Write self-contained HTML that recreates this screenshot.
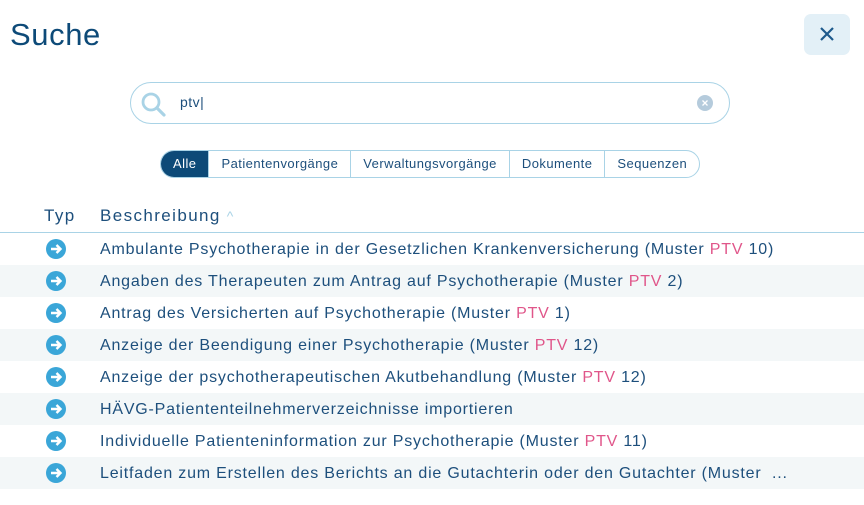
<!DOCTYPE html>
<html><head><meta charset="utf-8"><style>
*{margin:0;padding:0;box-sizing:border-box}
body{width:864px;height:505px;background:#fff;font-family:"Liberation Sans",sans-serif;color:#1d4f7c;position:relative;overflow:hidden}
.title{position:absolute;left:10px;top:17px;font-size:31px;color:#0d4a78;letter-spacing:0.6px}
.close{position:absolute;left:804px;top:14px;width:46px;height:41px;background:#e3f0f7;border-radius:7px}
.search{position:absolute;left:130px;top:82px;width:600px;height:42px;border:1.5px solid #a9d3e6;border-radius:21px}
.search .q{position:absolute;left:49px;top:11px;font-size:14px;color:#1d4f7c;letter-spacing:0.5px}
.clr{position:absolute;left:566px;top:12px;width:16px;height:16px;border-radius:50%;background:#b5cbdc}
.tabs{position:absolute;left:160px;top:150px;height:28px;border:1px solid #a9d3e6;border-radius:14px;display:flex;overflow:hidden;font-size:13px;letter-spacing:0.45px}
.tabs div{padding:0 12px;line-height:26px;border-left:1px solid #a9d3e6;color:#1d4f7c}
.tabs div.a{background:#0d4a78;color:#fff;border-left:none;padding:0 12px}
.hdr{position:absolute;top:206px;font-size:17px;color:#1d4f7c;letter-spacing:1.4px}
.line{position:absolute;left:0;top:232px;width:864px;height:1px;background:#a9d3e6}
.row{position:absolute;left:0;width:864px;height:32px}
.row.alt{background:#f3f7f8}
.row svg{position:absolute;left:46px;top:6px}
.row span{position:absolute;left:100px;top:8px;font-size:16px;white-space:nowrap;letter-spacing:0.8px}
.p{color:#e0568a}
</style></head><body>
<div class="title">Suche</div>
<div class="close"><svg width="46" height="41"><path d="M17 14 L29 26 M29 14 L17 26" stroke="#1d5a8c" stroke-width="2.2"/></svg></div>
<div class="search">
<svg style="position:absolute;left:8px;top:7px" width="28" height="28"><circle cx="12" cy="12" r="8" fill="none" stroke="#a9d3e6" stroke-width="2.8"/><path d="M18 18 L25 25" stroke="#a9d3e6" stroke-width="3.2" stroke-linecap="round"/></svg>
<div class="q">ptv|</div>
<div class="clr"><svg width="16" height="16"><path d="M5.5 5.5L10.5 10.5M10.5 5.5L5.5 10.5" stroke="#fff" stroke-width="1.3"/></svg></div>
</div>
<div class="tabs"><div class="a">Alle</div><div>Patientenvorgänge</div><div>Verwaltungsvorgänge</div><div>Dokumente</div><div>Sequenzen</div></div>
<div class="hdr" style="left:44px">Typ</div>
<div class="hdr" style="left:100px">Beschreibung<span style="color:#a9d3e6;font-size:14px;margin-left:6px">^</span></div>
<div class="line"></div>
<div class="row" style="top:233px"><svg width="20" height="20"><circle cx="10" cy="10" r="10" fill="#3aa6d8"/><path d="M5 10H14M10.5 6L14.5 10L10.5 14" stroke="#fff" stroke-width="2.4" fill="none"/></svg><span>Ambulante Psychotherapie in der Gesetzlichen Krankenversicherung (Muster <i class="p" style="font-style:normal">PTV</i> 10)</span></div>
<div class="row alt" style="top:265px"><svg width="20" height="20"><circle cx="10" cy="10" r="10" fill="#3aa6d8"/><path d="M5 10H14M10.5 6L14.5 10L10.5 14" stroke="#fff" stroke-width="2.4" fill="none"/></svg><span>Angaben des Therapeuten zum Antrag auf Psychotherapie (Muster <i class="p" style="font-style:normal">PTV</i> 2)</span></div>
<div class="row" style="top:297px"><svg width="20" height="20"><circle cx="10" cy="10" r="10" fill="#3aa6d8"/><path d="M5 10H14M10.5 6L14.5 10L10.5 14" stroke="#fff" stroke-width="2.4" fill="none"/></svg><span>Antrag des Versicherten auf Psychotherapie (Muster <i class="p" style="font-style:normal">PTV</i> 1)</span></div>
<div class="row alt" style="top:329px"><svg width="20" height="20"><circle cx="10" cy="10" r="10" fill="#3aa6d8"/><path d="M5 10H14M10.5 6L14.5 10L10.5 14" stroke="#fff" stroke-width="2.4" fill="none"/></svg><span>Anzeige der Beendigung einer Psychotherapie (Muster <i class="p" style="font-style:normal">PTV</i> 12)</span></div>
<div class="row" style="top:361px"><svg width="20" height="20"><circle cx="10" cy="10" r="10" fill="#3aa6d8"/><path d="M5 10H14M10.5 6L14.5 10L10.5 14" stroke="#fff" stroke-width="2.4" fill="none"/></svg><span>Anzeige der psychotherapeutischen Akutbehandlung (Muster <i class="p" style="font-style:normal">PTV</i> 12)</span></div>
<div class="row alt" style="top:393px"><svg width="20" height="20"><circle cx="10" cy="10" r="10" fill="#3aa6d8"/><path d="M5 10H14M10.5 6L14.5 10L10.5 14" stroke="#fff" stroke-width="2.4" fill="none"/></svg><span>HÄVG-Patiententeilnehmerverzeichnisse importieren</span></div>
<div class="row" style="top:425px"><svg width="20" height="20"><circle cx="10" cy="10" r="10" fill="#3aa6d8"/><path d="M5 10H14M10.5 6L14.5 10L10.5 14" stroke="#fff" stroke-width="2.4" fill="none"/></svg><span>Individuelle Patienteninformation zur Psychotherapie (Muster <i class="p" style="font-style:normal">PTV</i> 11)</span></div>
<div class="row alt" style="top:457px"><svg width="20" height="20"><circle cx="10" cy="10" r="10" fill="#3aa6d8"/><path d="M5 10H14M10.5 6L14.5 10L10.5 14" stroke="#fff" stroke-width="2.4" fill="none"/></svg><span>Leitfaden zum Erstellen des Berichts an die Gutachterin oder den Gutachter (Muster &nbsp;...</span></div>
</body></html>
